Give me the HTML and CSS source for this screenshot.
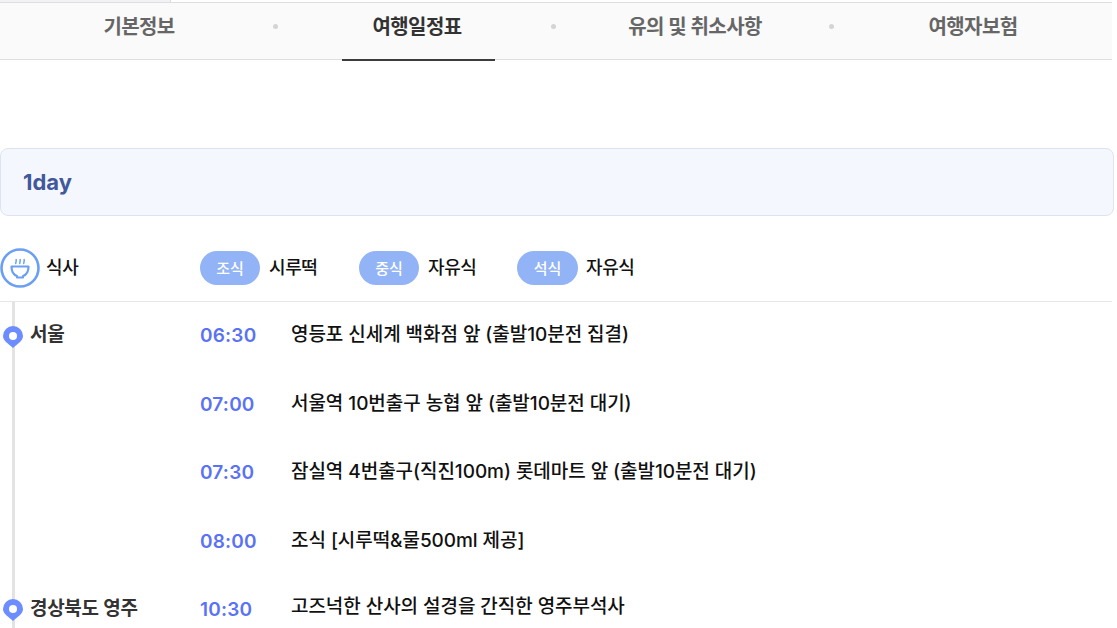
FILE: index.html
```html
<!DOCTYPE html>
<html lang="ko">
<head>
<meta charset="utf-8">
<title>여행일정표</title>
<link rel="stylesheet" href="styles.css">
</head>
<body>
<div class="page">
  <div class="top-stub"></div>
  <nav class="tabs">
    <a class="tab">기본정보</a>
    <a class="tab active">여행일정표</a>
    <a class="tab">유의 및 취소사항</a>
    <a class="tab">여행자보험</a>
  </nav>
  <section class="day">
    <h2 class="day-bar">1day</h2>
    <div class="meals">
      <div class="meal-label">
        <svg class="meal-icon" viewBox="0 0 40 40" width="40" height="40" aria-hidden="true">
          <circle cx="20" cy="20" r="18.500" fill="#fff" stroke="#6a9ff5" stroke-width="2.600"/>
          <path d="M11.500 18.500h17c0 5-2.500 8.500-5.500 9.500v1.500h-6v-1.500c-3-1-5.500-4.500-5.500-9.500z" fill="none" stroke="#6a9ff5" stroke-width="2.200" stroke-linejoin="round"/>
          <path d="M16 16c-1-1.500 1-2.500 0-5M20 16c-1-1.500 1-2.500 0-5M24 16c-1-1.500 1-2.500 0-5" fill="none" stroke="#6a9ff5" stroke-width="1.500"/>
        </svg>
        <span class="meal-title">식사</span>
      </div>
      <div class="meal-list">
        <div class="meal meal-a"><span class="pill">조식</span><span class="meal-name">시루떡</span></div>
        <div class="meal"><span class="pill">중식</span><span class="meal-name">자유식</span></div>
        <div class="meal meal-c"><span class="pill">석식</span><span class="meal-name">자유식</span></div>
      </div>
    </div>
    <ol class="timeline">
      <li class="stop">
        <div class="place"><svg class="pin" viewBox="0 0 20 22" width="20" height="22" aria-hidden="true"><path d="M10 0a10 10 0 0 1 10 10c0 5-6 8-10 12C6 18 0 15 0 10A10 10 0 0 1 10 0z" fill="#6c8cff"/><circle cx="10" cy="10" r="4" fill="#fff"/></svg><span>서울</span></div>
        <time>06:30</time><p>영등포 신세계 백화점 앞 (출발10분전 집결)</p>
      </li>
      <li class="stop">
        <div class="place"></div>
        <time>07:00</time><p>서울역 10번출구 농협 앞 (출발10분전 대기)</p>
      </li>
      <li class="stop">
        <div class="place"></div>
        <time>07:30</time><p>잠실역 4번출구(직진100m) 롯데마트 앞 (출발10분전 대기)</p>
      </li>
      <li class="stop">
        <div class="place"></div>
        <time>08:00</time><p>조식 [시루떡&amp;물500ml 제공]</p>
      </li>
      <li class="stop stop-last">
        <div class="place"><svg class="pin" viewBox="0 0 20 22" width="20" height="22" aria-hidden="true"><path d="M10 0a10 10 0 0 1 10 10c0 5-6 8-10 12C6 18 0 15 0 10A10 10 0 0 1 10 0z" fill="#6c8cff"/><circle cx="10" cy="10" r="4" fill="#fff"/></svg><span>경상북도 영주</span></div>
        <time>10:30</time><p>고즈넉한 산사의 설경을 간직한 영주부석사</p>
      </li>
    </ol>
  </section>
</div>
</body>
</html>
```

FILE: styles.css
```css
* { box-sizing: border-box; }
html, body { margin: 0; padding: 0; height: 628px; overflow: hidden; background: #fff; }
body { font-family: Inter, "Noto Sans CJK KR", sans-serif; color: #111; }
.page { width: 1112px; }
.top-stub { width: 171px; height: 2px; border-right: 1px solid #ddd; background: #f2f2f6; }
.tabs {
  display: grid; grid-template-columns: repeat(4, 1fr);
  height: 58px; background: #fafafa;
  border-top: 1px solid #dedede; border-bottom: 1px solid #dedede;
}
.tab {
  position: relative; display: flex; align-items: flex-start; justify-content: center;
  padding-top: 8px; height: 57px;
  font-size: 20px; font-weight: 600; color: #666; letter-spacing: -0.6px;
}
.tab + .tab::before {
  content: ""; position: absolute; left: -5px; top: 21px;
  width: 5px; height: 5px; border-radius: 50%; background: #d4d4d4;
}
.tab.active { font-weight: 700; color: #333; }
.tab.active::after {
  content: ""; position: absolute; left: 64px; width: 153px; bottom: -1px; height: 2px; background: #3c3c3c;
}
.day { padding-top: 88px; }
.day-bar {
  margin: 0; width: 1114px; height: 68px; padding: 0 22px; display: flex; align-items: center;
  background: #f4f7fd; border: 1px solid #dde4f1; border-radius: 8px;
  font-size: 22px; font-weight: 700; color: #41589c;
}
.meals {
  display: flex; align-items: center; height: 86px; padding-top: 18px;
  border-bottom: 1px solid #e6e6e6; font-size: 18px;
}
.meal-label { display: flex; align-items: center; gap: 6px; width: 200px; }
.meal-icon { display: block; }
.meal-title, .meal-name { position: relative; top: -2px; font-weight: 500; letter-spacing: -0.4px; }
.meal-list { display: flex; }
.meal { display: flex; align-items: center; gap: 9px; width: 158px; }
.meal-a { width: 159px; }
.pill {
  display: flex; align-items: center; justify-content: center; width: 60px; height: 34px; padding-bottom: 1px;
  border-radius: 17px; background: #92b3f5; color: #fff; font-size: 15px; font-weight: 500;
}
.meal-c .pill { width: 61px; }
.meal-c { gap: 8px; }
.timeline {
  list-style: none; margin: 0; padding: 0; position: relative;
}
.timeline::before {
  content: ""; position: absolute; left: 12px; top: 0; bottom: -40px; width: 3px; background: #e3e3e3;
}
.stop {
  display: grid; grid-template-columns: 200px 91px 1fr; align-items: flex-start;
  height: 68.500px; padding-top: 20px; font-size: 19px; line-height: 26px;
}
.place {
  position: relative; padding-left: 30px; font-weight: 600; color: #333; letter-spacing: -0.3px;
}
.pin { position: absolute; left: 3px; top: 4px; }
.stop time { font-weight: 600; color: #5a72f5; padding-top: 1px; letter-spacing: 0.2px; }
.stop p { margin: 0; font-weight: 500; color: #111; letter-spacing: -0.05px; }
.stop-last p { margin-top: -2px; }
.stop-last .pin { top: 3px; }
```
